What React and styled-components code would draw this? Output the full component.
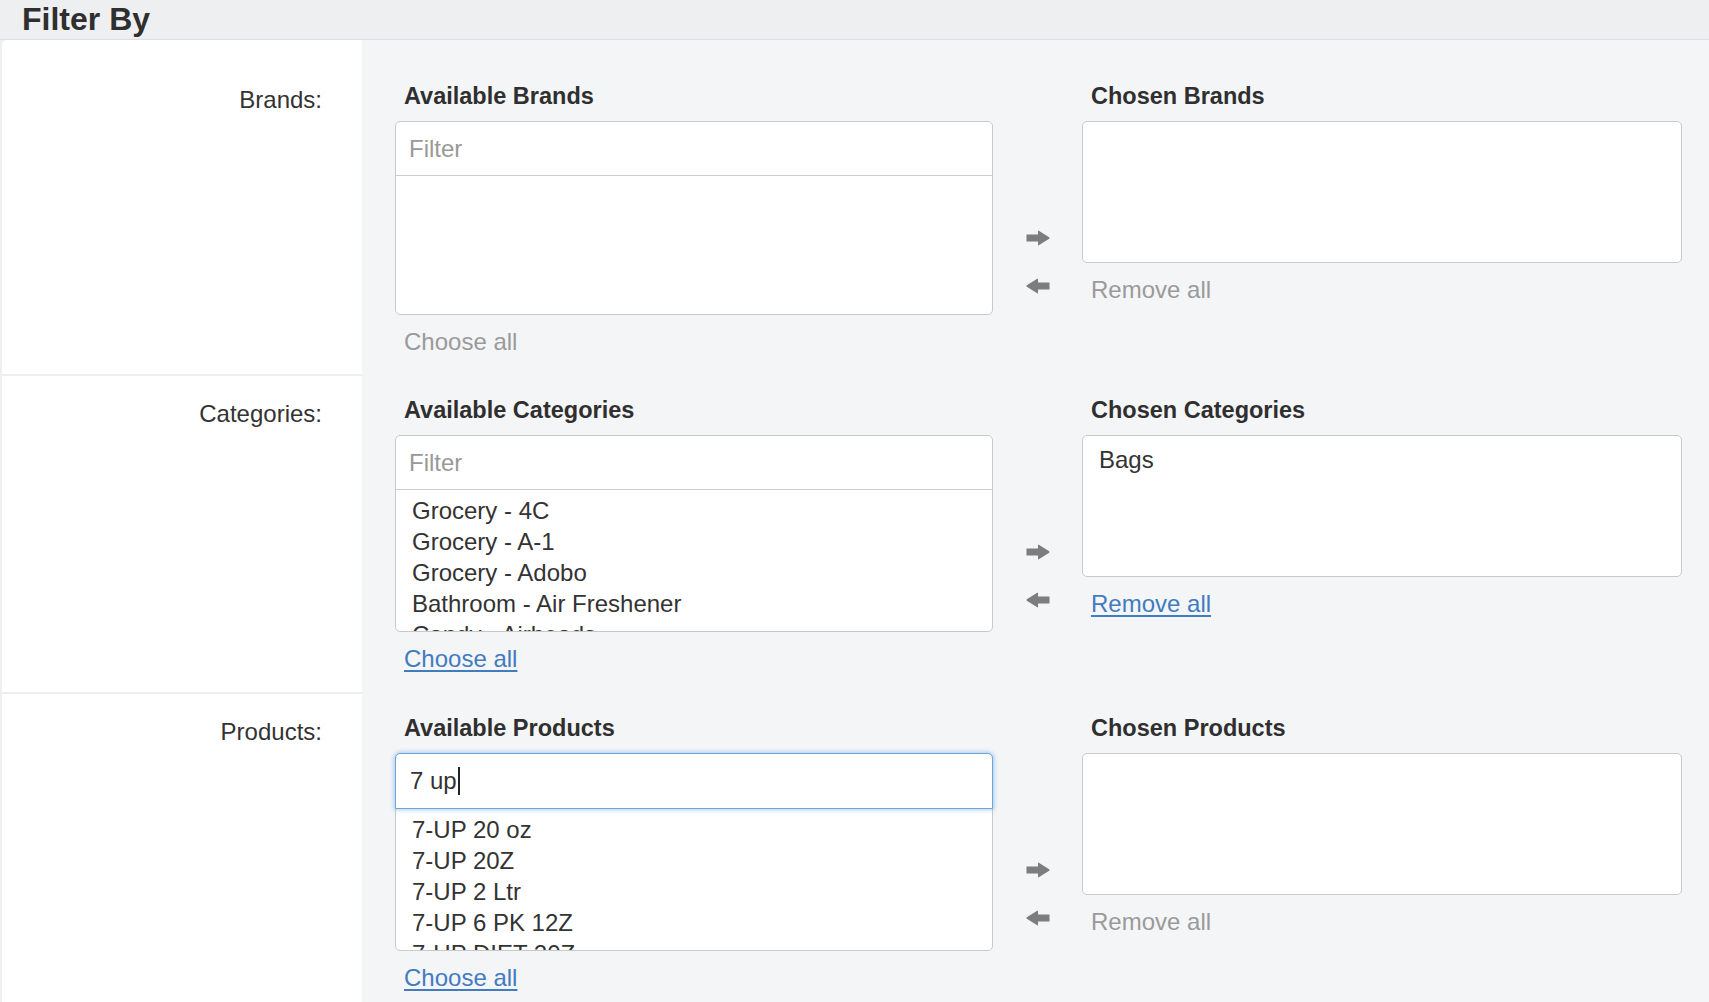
import React from 'react';
import styled, { createGlobalStyle, css } from 'styled-components';

const GlobalStyle = createGlobalStyle`
  html, body { margin: 0; padding: 0; }
  body {
    background: #eeeff1;
    font-family: "Liberation Sans", Arial, Helvetica, sans-serif;
    color: #333;
  }
`;

const Header = styled.h1`
  margin: 0;
  height: 40px;
  box-sizing: border-box;
  padding: 2px 0 0 22px;
  font-size: 32px;
  line-height: 34px;
  font-weight: bold;
  color: #2f2f2f;
  border-bottom: 1px solid #dcdee1;
`;

const Panel = styled.div`
  margin-left: 2px;
  background: #f4f5f7;
  border-top-left-radius: 5px;
  overflow: hidden;
`;

const Row = styled.div`
  display: grid;
  grid-template-columns: 360px 1fr;
`;

const LabelCell = styled.div`
  background: #fff;
  border-bottom: 2px solid #eeeeee;
  padding: ${(p) => (p.$first ? 46 : 24)}px 40px 0 0;
  text-align: right;
  font-size: 24px;
  line-height: 28px;
  color: #333;
`;

const SelectorCell = styled.div`
  display: grid;
  grid-template-columns: 598px 89px 1fr;
  padding: ${(p) => (p.$first ? '42px 27px 19px' : '20px 27px 20px')} 33px;
`;

const Column = styled.div`
  display: flex;
  flex-direction: column;
  min-width: 0;
`;

const Heading = styled.h2`
  margin: 0 0 11px;
  padding-left: 9px;
  font-size: 23.5px;
  line-height: 28px;
  font-weight: bold;
  color: #2f2f2f;
`;

const Box = styled.div`
  background: #fff;
  border: 1px solid #c9c9c9;
  border-radius: 5px;
  display: flex;
  flex-direction: column;
`;

const FilterField = styled.div`
  height: 54px;
  box-sizing: border-box;
  border-bottom: 1px solid #cccccc;
  padding: 0 13px;
  display: flex;
  align-items: center;
  font-size: 24px;
  color: #999;
  ${(p) =>
    p.$focused &&
    css`
      position: relative;
      z-index: 1;
      margin: -1px -1px 0;
      height: 56px;
      padding-left: 14px;
      border: 1px solid #6aa7e0;
      border-radius: 5px 5px 0 0;
      box-shadow: 0 0 4px 1px rgba(106, 167, 224, 0.55);
      color: #333;
    `}
`;

const Caret = styled.span`
  display: inline-block;
  width: 2px;
  height: 28px;
  margin-left: 1px;
  background: #222;
`;

const OptionList = styled.div`
  height: ${(p) => p.$height}px;
  box-sizing: border-box;
  overflow: hidden;
  padding: ${(p) => p.$top}px 0 0 16px;
  font-size: 24px;
  line-height: 31px;
  color: #333;
  white-space: nowrap;
`;

const ActionLink = styled.a`
  align-self: flex-start;
  margin-top: 12px;
  padding-left: 9px;
  font-size: 24px;
  line-height: 30px;
  cursor: pointer;
  color: ${(p) => (p.$active ? '#437bbf' : '#9a9a9a')};
  text-decoration: ${(p) => (p.$active ? 'underline' : 'none')};
  text-decoration-thickness: 2px;
  text-underline-offset: 3px;
`;

const Chooser = styled.div`
  display: flex;
  flex-direction: column;
  align-items: center;
  gap: 32px;
  padding-top: 148px;
`;

const Arrow = ({ left }) => (
  <svg width="24" height="16" viewBox="0 0 24 16" style={left ? { transform: 'scaleX(-1)' } : undefined}>
    <path d="M0.5 4.5 H12 V1 Q12 0.2 12.8 0.7 L23.2 7.3 Q24 8 23.2 8.7 L12.8 15.3 Q12 15.8 12 15 V11.5 H0.5 Z" fill="#7d7d7d" />
  </svg>
);

const rows = [
  { label: 'Brands:', name: 'Brands', available: [], chosen: [], listHeight: 138 },
  {
    label: 'Categories:',
    name: 'Categories',
    available: ['Grocery - 4C', 'Grocery - A-1', 'Grocery - Adobo', 'Bathroom - Air Freshener', 'Candy - Airheads'],
    chosen: ['Bags'],
    listHeight: 141,
  },
  {
    label: 'Products:',
    name: 'Products',
    filter: '7 up',
    available: ['7-UP 20 oz', '7-UP 20Z', '7-UP 2 Ltr', '7-UP 6 PK 12Z', '7-UP DIET 20Z'],
    chosen: [],
    listHeight: 141,
  },
];

const FilterRow = ({ row, first }) => (
  <Row>
    <LabelCell $first={first}>{row.label}</LabelCell>
    <SelectorCell $first={first}>
      <Column>
        <Heading>Available {row.name}</Heading>
        <Box>
          <FilterField $focused={!!row.filter}>
            {row.filter ? (
              <>
                {row.filter}
                <Caret />
              </>
            ) : (
              'Filter'
            )}
          </FilterField>
          <OptionList $height={row.listHeight} $top={5}>
            {row.available.map((o) => (
              <div key={o}>{o}</div>
            ))}
          </OptionList>
        </Box>
        <ActionLink $active={row.available.length > 0}>Choose all</ActionLink>
      </Column>
      <Chooser>
        <Arrow />
        <Arrow left />
      </Chooser>
      <Column>
        <Heading>Chosen {row.name}</Heading>
        <Box>
          <OptionList $height={140} $top={8}>
            {row.chosen.map((o) => (
              <div key={o}>{o}</div>
            ))}
          </OptionList>
        </Box>
        <ActionLink $active={row.chosen.length > 0}>Remove all</ActionLink>
      </Column>
    </SelectorCell>
  </Row>
);

export default function App() {
  return (
    <>
      <GlobalStyle />
      <Header>Filter By</Header>
      <Panel>
        {rows.map((row, i) => (
          <FilterRow key={row.name} row={row} first={i === 0} />
        ))}
      </Panel>
    </>
  );
}
